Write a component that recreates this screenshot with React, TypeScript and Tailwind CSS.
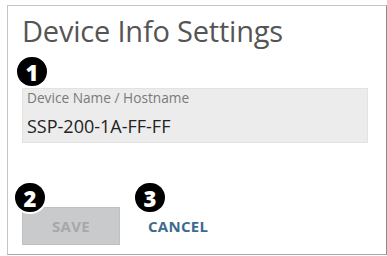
import React from 'react';

const Marker = ({ n, className = '' }: { n: number; className?: string }) => (
  <span
    className={`flex items-center justify-center w-[30px] h-[29px] rounded-full bg-black text-white text-[22px] font-extrabold leading-none ${className}`}
  >
    {n}
  </span>
);

const App: React.FC = () => {
  return (
    <div className="pl-[7px] pt-[5px] bg-white min-h-[256px] font-['Open_Sans',sans-serif]">
      <div className="w-[380px] h-[250px] border border-[#c4c4c4] border-r-[#8c8c8c] border-b-[#a8a8a8] bg-white px-[14px] pt-[6px]">
        <h1 className="text-[29px] leading-[37px] text-[#555] font-normal tracking-[-0.2px]">
          Device Info Settings
        </h1>

        <Marker n={1} className="mt-[8px] -ml-[5px]" />

        <div className="mt-[2px] w-[346px] h-[55px] bg-[#ececec] border border-[#e2e2e2] px-[4px]">
          <div className="text-[13.7px] leading-[18px] text-[#7a7a7a]">Device Name / Hostname</div>
          <div className="mt-[7px] text-[18px] leading-[24px] text-[#222]">SSP-200-1A-FF-FF</div>
        </div>

        <div className="mt-[64px] flex items-center">
          <div className="relative">
            <button className="w-[98px] h-[38px] bg-[#c9cacc] border border-[#bfc0c2] text-[15px] font-bold text-[#a6a8aa] tracking-[0.3px]">
              SAVE
            </button>
            <Marker n={2} className="absolute -left-[7px] -top-[24px] ring-2 ring-white" />
          </div>
          <div className="relative ml-[14px]">
            <button className="h-[38px] px-[14px] text-[15px] font-bold text-[#3d6b8e] tracking-[0.3px]">
              CANCEL
            </button>
            <Marker n={3} className="absolute left-[1px] -top-[24px]" />
          </div>
        </div>
      </div>
    </div>
  );
};

export default App;
